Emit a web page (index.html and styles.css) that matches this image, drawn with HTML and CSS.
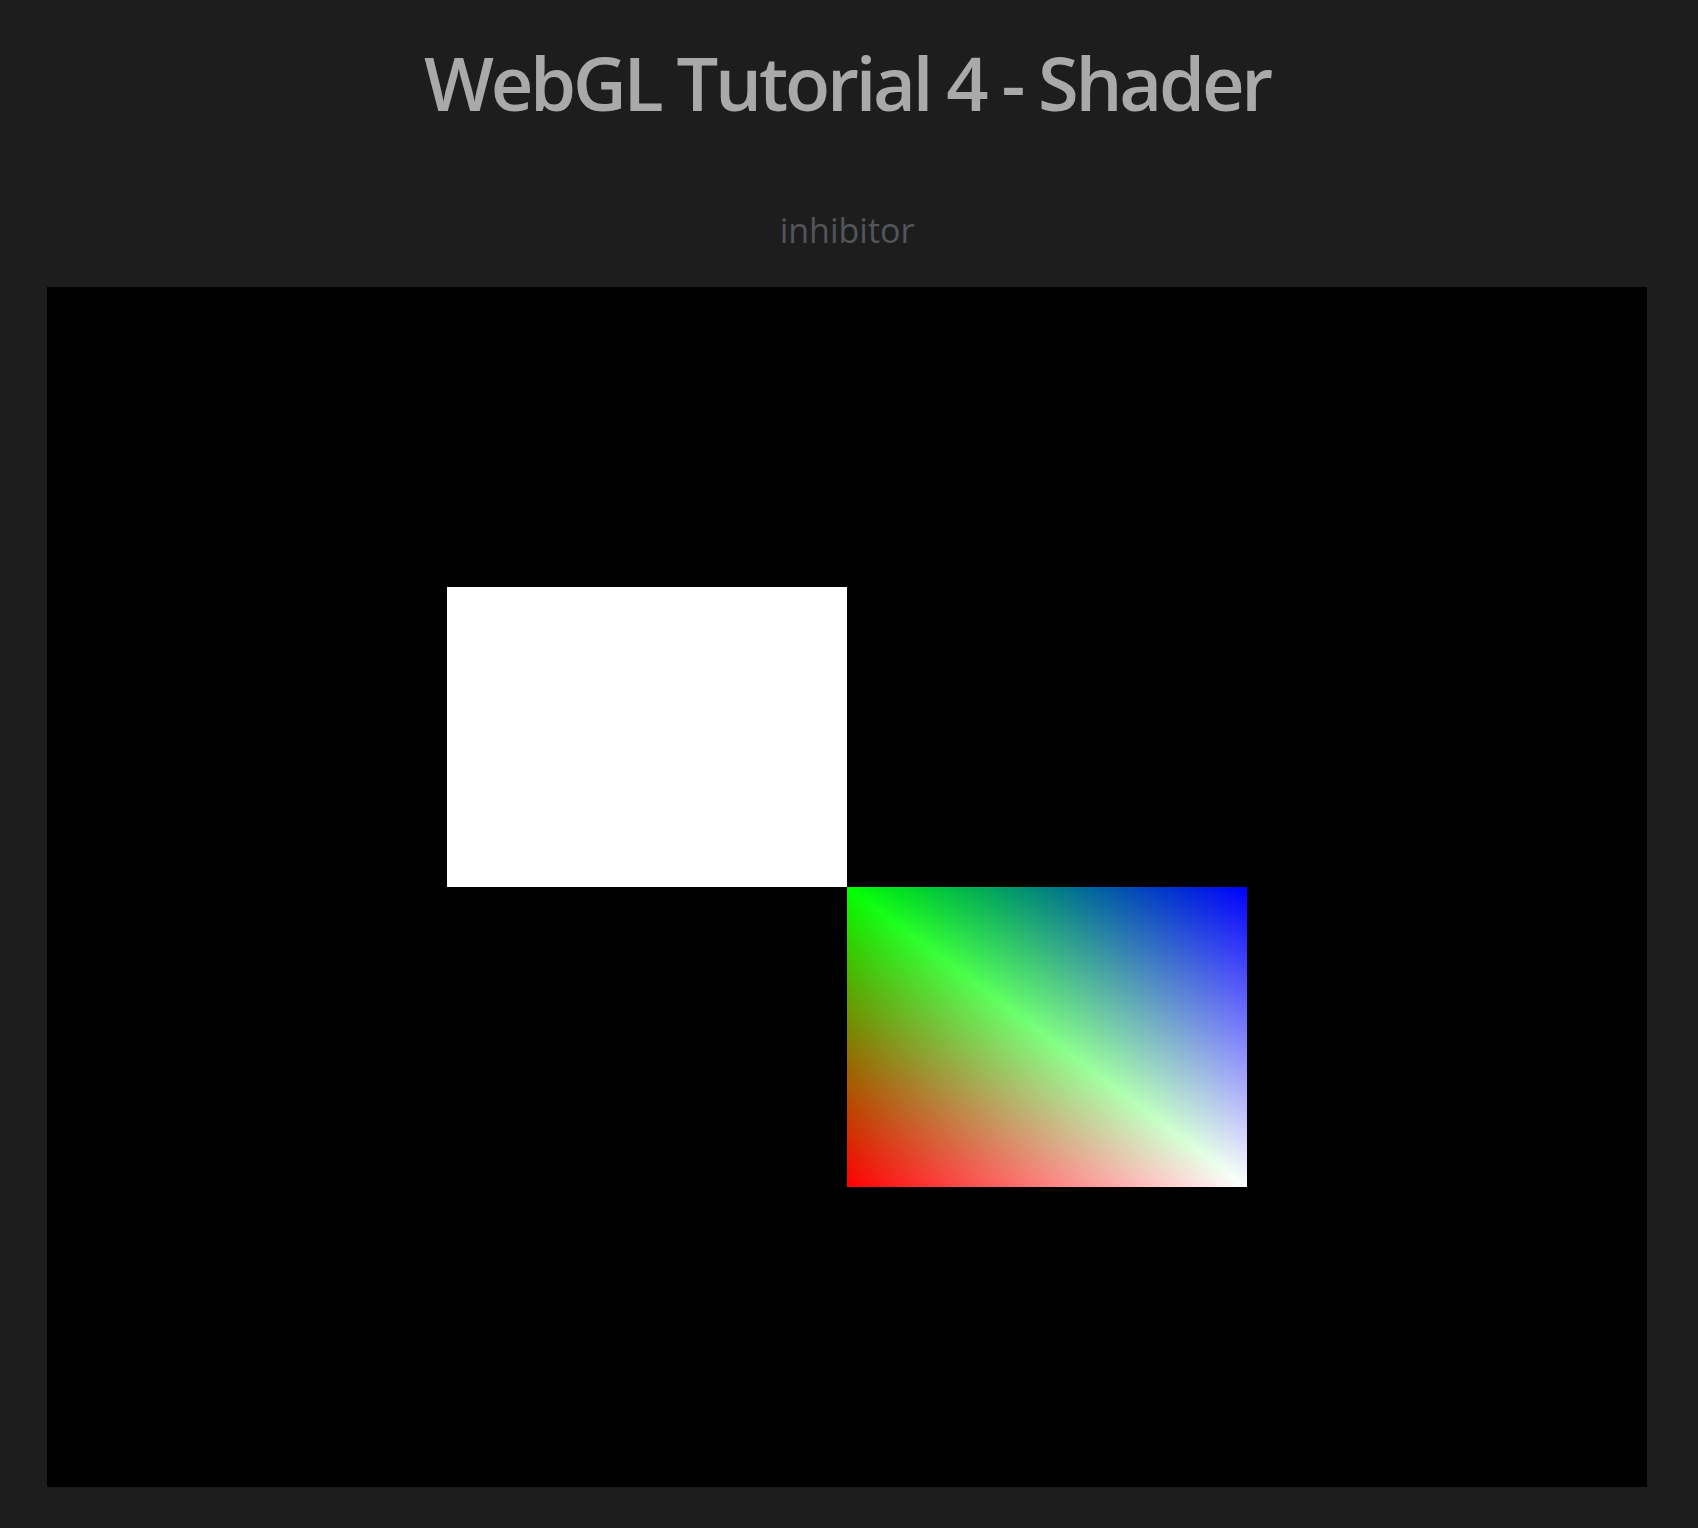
FILE: index.html
```html
<!DOCTYPE html>
<html>
<head>
<meta charset="utf-8">
<title>WebGL Tutorial 4 - Shader</title>
<link rel="stylesheet" href="styles.css">
</head>
<body>
<div class="page">
  <h1 class="title">WebGL Tutorial 4 - Shader</h1>
  <p class="author">inhibitor</p>
  <canvas id="glcanvas" class="stage" width="1600" height="1200"></canvas>
</div>
<script src="script.js"></script>
</body>
</html>
```
FILE: styles.css
```css
html, body {
  margin: 0;
  padding: 0;
  background: #1d1d1d;
}
.page {
  display: flex;
  flex-direction: column;
  align-items: center;
  padding: 0 4px 41px 0;
  font-family: "Open Sans", "Noto Sans", sans-serif;
}
.title {
  margin: 33px 0 0 0;
  font-size: 74px;
  line-height: 100px;
  font-weight: 600;
  color: #a9a9a9;
  letter-spacing: -3.2px;
}
.author {
  margin: 77px 0 0 0;
  font-size: 34px;
  line-height: 40px;
  color: #53555a;
}
.stage {
  display: block;
  margin-top: 37px;
  width: 1600px;
  height: 1200px;
  background: #000;
}
```
FILE: script.js
```js
(function () {
  var c = document.getElementById('glcanvas');
  var ctx = c.getContext('2d');
  ctx.fillStyle = '#000';
  ctx.fillRect(0, 0, 1600, 1200);
  ctx.fillStyle = '#fff';
  ctx.fillRect(400, 300, 400, 300);
  var W = 400, H = 300;
  var img = ctx.createImageData(W, H);
  var d = img.data;
  var TL = [0, 1, 0], TR = [0, 0, 1], BL = [1, 0, 0], BR = [1, 1, 1];
  for (var j = 0; j < H; j++) {
    for (var i = 0; i < W; i++) {
      var u = (i + 0.5) / W, v = (j + 0.5) / H;
      var k = (j * W + i) * 4;
      for (var ch = 0; ch < 3; ch++) {
        var val;
        if (u >= v) {
          val = TL[ch] * (1 - u) + TR[ch] * (u - v) + BR[ch] * v;
        } else {
          val = TL[ch] * (1 - v) + BL[ch] * (v - u) + BR[ch] * u;
        }
        d[k + ch] = Math.round(val * 255);
      }
      d[k + 3] = 255;
    }
  }
  ctx.putImageData(img, 800, 600);
})();
```
